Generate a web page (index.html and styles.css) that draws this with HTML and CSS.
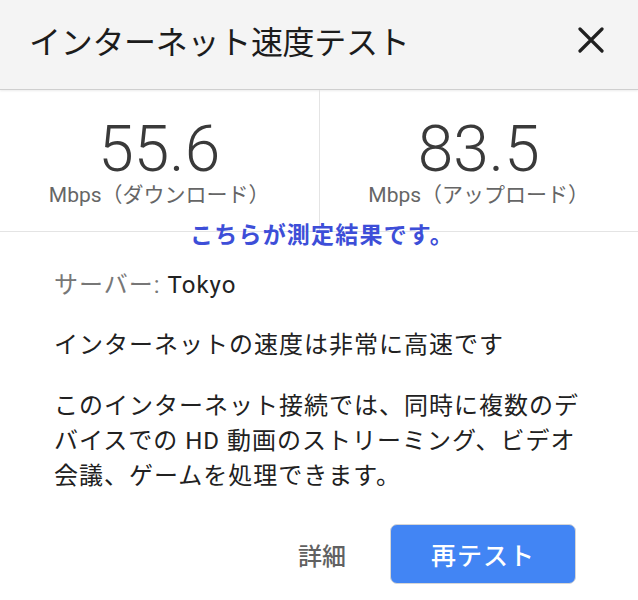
FILE: index.html
```html
<!DOCTYPE html>
<html lang="ja">
<head>
    <meta charset="UTF-8">
    <meta name="viewport" content="width=device-width, initial-scale=1.0">
    <title>インターネット速度テスト</title>
    <link rel="stylesheet" href="styles.css">
</head>
<body>
    <div class="dialog">
        <div class="header">
            <h1 class="title">インターネット速度テスト</h1>
            <button class="close" aria-label="閉じる">
                <svg width="26" height="26" viewBox="0 0 26 26">
                    <path d="M2 2 L24 24 M24 2 L2 24" stroke="#202020" stroke-width="3.2" stroke-linecap="round"/>
                </svg>
            </button>
        </div>

        <div class="stats">
            <div class="stat">
                <div class="value">55.6</div>
                <div class="unit">Mbps（ダウンロード）</div>
            </div>
            <div class="stat">
                <div class="value">83.5</div>
                <div class="unit">Mbps（アップロード）</div>
            </div>
            <div class="note">こちらが測定結果です。</div>
        </div>

        <div class="content">
            <p class="server"><span class="label">サーバー:</span> Tokyo</p>
            <p class="summary">インターネットの速度は非常に高速です</p>
            <p class="detail">このインターネット接続では、同時に複数のデバイスでの HD 動画のストリーミング、ビデオ会議、ゲームを処理できます。</p>
        </div>

        <div class="actions">
            <button class="more">詳細</button>
            <button class="retest">再テスト</button>
        </div>
    </div>
</body>
</html>
```

FILE: styles.css
```css
body {
    margin: 0;
    font-family: Roboto, "Noto Sans CJK JP", sans-serif;
    background: #fff;
    color: #212121;
}
.dialog {
    width: 638px;
    height: 600px;
    overflow: hidden;
}
.header {
    height: 90px;
    background: #f4f4f4;
    border-bottom: 1px solid #cfcfcf;
    box-shadow: 0 1px 2px rgba(0,0,0,0.08);
    display: flex;
    align-items: center;
    justify-content: space-between;
    padding: 0 34px 0 29px;
    box-sizing: border-box;
}
.title {
    margin: -10px 0 0 0;
    font-size: 32px;
    font-weight: 400;
    letter-spacing: -0.3px;
    color: #1c1c1c;
}
.close {
    background: none;
    border: none;
    padding: 0;
    width: 26px;
    height: 26px;
    margin-top: -10px;
    cursor: pointer;
}
.stats {
    position: relative;
    display: flex;
    height: 141px;
    border-bottom: 1px solid #e4e4e4;
}
.stat {
    flex: 1;
    display: flex;
    flex-direction: column;
    align-items: center;
    padding-top: 28px;
}
.stat + .stat {
    border-left: 1px solid #e4e4e4;
}
.value {
    font-size: 64px;
    font-weight: 300;
    line-height: 64px;
    color: #3a3a3a;
}
.unit {
    font-size: 21px;
    color: #666;
    line-height: 26px;
}
.note {
    position: absolute;
    left: 0;
    right: 0;
    bottom: -19px;
    text-align: center;
    padding-left: 6px;
    font-size: 23px;
    font-weight: 700;
    letter-spacing: 1.2px;
    color: #3d4ed8;
    line-height: 28px;
}
.content {
    padding: 36px 54px 0 54px;
}
.content p {
    margin: 0;
    font-size: 24px;
    letter-spacing: 1px;
    line-height: 35px;
}
.server {
    color: #222;
}
.label {
    color: #777;
}
.summary {
    margin-top: 25px !important;
}
.detail {
    margin-top: 26px !important;
}
.actions {
    display: flex;
    justify-content: flex-end;
    align-items: center;
    gap: 44px;
    padding: 30px 62px 0 0;
}
.more {
    background: none;
    border: none;
    font-family: inherit;
    font-size: 24px;
    font-weight: 500;
    color: #616161;
    padding: 0;
    cursor: pointer;
}
.retest {
    width: 186px;
    height: 60px;
    background: #4285f4;
    border: 1px solid #d6d6d6;
    border-radius: 7px;
    color: #fff;
    font-family: inherit;
    font-size: 25px;
    font-weight: 500;
    letter-spacing: 1px;
    cursor: pointer;
}
```
